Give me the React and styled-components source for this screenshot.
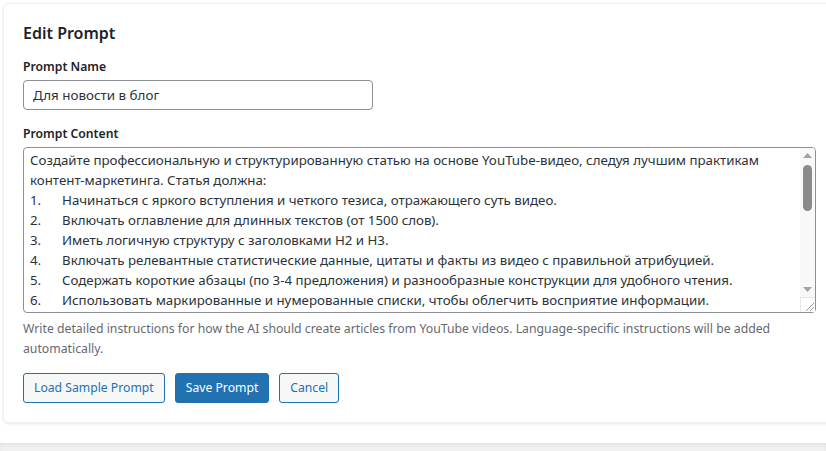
import React from "react";
import styled, { createGlobalStyle } from "styled-components";

const Global = createGlobalStyle`
  html, body { margin: 0; padding: 0; background: #ffffff; }
  body { font-family: "Noto Sans", "Open Sans", sans-serif; color: #1d2327; }
  * { box-sizing: border-box; }
`;

const Page = styled.div`
  width: 826px;
  height: 451px;
  overflow: hidden;
  display: flex;
  flex-direction: column;
`;

const Top = styled.div`
  height: 443px;
  padding: 3px 0 0 3px;
  background: #ffffff;
`;

const Bottom = styled.div`
  flex: 1;
  background: #f0f0f1;
  box-shadow: inset 0 2px 3px rgba(0, 0, 0, 0.06);
`;

const Card = styled.div`
  width: 840px;
  height: 420px;
  background: #fff;
  border: 1px solid #f0f0f1;
  border-radius: 6px;
  box-shadow: 0 1px 3px rgba(0, 0, 0, 0.1);
  padding: 16px 19px;
`;

const Title = styled.h2`
  margin: 0 0 12px;
  font-size: 16px;
  font-weight: 600;
  line-height: 26px;
  color: #1d2327;
`;

const Label = styled.label`
  display: block;
  font-size: 12.2px;
  font-weight: 600;
  line-height: 18px;
  margin-bottom: 4px;
  color: #1d2327;
`;

const Field = styled.div`
  margin-bottom: ${(p) => p.$mb}px;
`;

const Input = styled.input`
  display: block;
  width: 350px;
  height: 30px;
  border: 1px solid #8c8f94;
  border-radius: 4px;
  padding: 0 9px;
  font-family: inherit;
  font-size: 13.4px;
  color: #2c3338;
  outline: none;
`;

const AreaWrap = styled.div`
  position: relative;
  width: 793px;
  height: 166px;
`;

const Area = styled.textarea`
  display: block;
  width: 100%;
  height: 100%;
  border: 1px solid #8c8f94;
  border-radius: 4px;
  padding: 2px 22px 2px 6px;
  font-family: inherit;
  font-size: 13.3px;
  line-height: 20px;
  color: #2c3338;
  tab-size: 32px;
  resize: none;
  outline: none;
  overflow: hidden;
`;

const Scrollbar = styled.div`
  position: absolute;
  top: 1px;
  right: 1px;
  bottom: 1px;
  width: 15px;
  display: flex;
  flex-direction: column;
  background: #f8f8f8;
  border-top-right-radius: 3px;
  border-bottom-right-radius: 3px;
`;

const Arrow = styled.div`
  height: 15px;
  display: flex;
  align-items: center;
  justify-content: center;
`;

const Track = styled.div`
  flex: 1;
  padding: 2px 3px;
`;

const Thumb = styled.div`
  width: 9px;
  height: 46px;
  border-radius: 5px;
  background: #8a8a8a;
`;

const Corner = styled.div`
  height: 15px;
  display: flex;
  align-items: flex-end;
  justify-content: flex-end;
  background: #ffffff;
  border-top: 1px solid #e6e6e6;
  border-left: 1px solid #e6e6e6;
`;

const Hint = styled.p`
  margin: 6px 0 0;
  font-size: 12.25px;
  line-height: 20px;
  color: #646970;
  width: 790px;
`;

const Actions = styled.div`
  display: flex;
  gap: 10px;
  margin-top: 14px;
`;

const Button = styled.button`
  height: 30px;
  padding: 0 10px;
  border-radius: 3px;
  border: 1px solid #2271b1;
  background: ${(p) => (p.$primary ? "#2271b1" : "#f6f7f7")};
  color: ${(p) => (p.$primary ? "#ffffff" : "#2271b1")};
  font-family: inherit;
  font-size: 12.2px;
  line-height: 28px;
  cursor: pointer;
`;

const content = `Создайте профессиональную и структурированную статью на основе YouTube-видео, следуя лучшим практикам контент-маркетинга. Статья должна:
1.\tНачинаться с яркого вступления и четкого тезиса, отражающего суть видео.
2.\tВключать оглавление для длинных текстов (от 1500 слов).
3.\tИметь логичную структуру с заголовками H2 и H3.
4.\tВключать релевантные статистические данные, цитаты и факты из видео с правильной атрибуцией.
5.\tСодержать короткие абзацы (по 3-4 предложения) и разнообразные конструкции для удобного чтения.
6.\tИспользовать маркированные и нумерованные списки, чтобы облегчить восприятие информации.
7.\tДобавлять практические примеры и рекомендации, полезные для читателя.
8.\tЗавершаться выводом и призывом к действию.`;

export default function App() {
  return (
    <Page>
      <Global />
      <Top>
        <Card>
          <Title>Edit Prompt</Title>
          <Field $mb={15}>
            <Label>Prompt Name</Label>
            <Input defaultValue="Для новости в блог" />
          </Field>
          <Field $mb={0}>
            <Label>Prompt Content</Label>
            <AreaWrap>
              <Area defaultValue={content} />
              <Scrollbar>
                <Arrow>
                  <svg width="9" height="5" viewBox="0 0 9 5">
                    <path d="M0 5 L4.5 0 L9 5 Z" fill="#a3a3a3" />
                  </svg>
                </Arrow>
                <Track>
                  <Thumb />
                </Track>
                <Arrow>
                  <svg width="9" height="5" viewBox="0 0 9 5">
                    <path d="M0 0 L4.5 5 L9 0 Z" fill="#a3a3a3" />
                  </svg>
                </Arrow>
                <Corner>
                  <svg width="12" height="12" viewBox="0 0 12 12">
                    <path d="M11 3 L3 11 M11 7 L7 11" stroke="#9a9a9a" strokeWidth="1" />
                  </svg>
                </Corner>
              </Scrollbar>
            </AreaWrap>
            <Hint>
              Write detailed instructions for how the AI should create articles from YouTube videos. Language-specific instructions will be added automatically.
            </Hint>
          </Field>
          <Actions>
            <Button>Load Sample Prompt</Button>
            <Button $primary>Save Prompt</Button>
            <Button>Cancel</Button>
          </Actions>
        </Card>
      </Top>
      <Bottom />
    </Page>
  );
}
